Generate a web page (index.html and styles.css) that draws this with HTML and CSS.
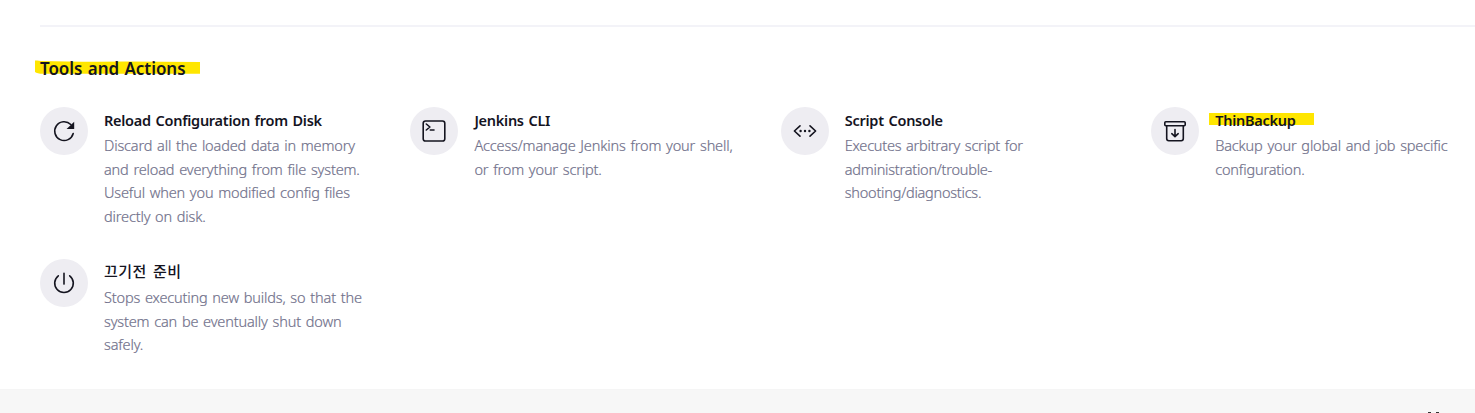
FILE: index.html
```html
<!DOCTYPE html>
<html lang="en">
<head>
<meta charset="utf-8">
<title>Tools and Actions</title>
<link rel="stylesheet" href="styles.css">
</head>
<body>
<main class="panel">
  <section class="section">
    <h2 class="section-title"><svg class="marker marker-heading" viewBox="0 0 165 14" preserveAspectRatio="none"><path d="M0 .6Q3 0 6 1Q40 2 90 1.6L165 2V13.8H8Q2 13.8 0 12Z"/></svg><span class="label">Tools and Actions</span></h2>
    <div class="grid">
      <article class="item">
        <div class="icon"><svg viewBox="0 0 24 24"><path d="M21.2 14.5A9.4 9.4 0 1 1 18.8 5.5"/><path class="solid" d="M22.2 2.8V10H14.6Z"/></svg></div>
        <div class="text"><h3 class="name"><span class="label">Reload Configuration from Disk</span></h3>
          <p class="desc">Discard all the loaded data in memory<br>and reload everything from file system.<br>Useful when you modified config files<br>directly on disk.</p></div>
      </article>
      <article class="item">
        <div class="icon"><svg viewBox="0 0 24 24"><rect x="1.2" y="2" width="21.6" height="20" rx="2.3"/><path d="M4.3 5L7.9 8L4.3 11M8.3 11H12"/></svg></div>
        <div class="text"><h3 class="name"><span class="label">Jenkins CLI</span></h3>
          <p class="desc">Access/manage Jenkins from your shell,<br>or from your script.</p></div>
      </article>
      <article class="item">
        <div class="icon"><svg viewBox="0 0 24 24"><path d="M7 6.8L1.4 12L7 17.2M17 6.8L22.6 12L17 17.2"/><g class="solid"><circle cx="7.6" cy="12" r="1.2"/><circle cx="12" cy="12" r="1.2"/><circle cx="16.4" cy="12" r="1.2"/></g></svg></div>
        <div class="text"><h3 class="name"><span class="label">Script Console</span></h3>
          <p class="desc tight">Executes arbitrary script for<br>administration/trouble-<br>shooting/diagnostics.</p></div>
      </article>
      <article class="item">
        <div class="icon"><svg viewBox="0 0 24 24"><rect x="1.8" y="2.8" width="20.4" height="4" rx="1"/><path d="M3.7 6.8V19.5Q3.7 21.7 5.8 21.7H18.2Q20.3 21.7 20.3 19.5V6.8M12 10.5V17.5M8.8 14.7L12 17.7L15.2 14.7"/></svg></div>
        <div class="text"><h3 class="name"><i class="marker marker-item"></i><span class="label">ThinBackup</span></h3>
          <p class="desc">Backup your global and job specific<br>configuration.</p></div>
      </article>
      <article class="item">
        <div class="icon"><svg viewBox="0 0 24 24"><path d="M6.3 4.8A9.3 9.3 0 1 0 17.7 4.8M12 2.2V13.1"/></svg></div>
        <div class="text"><h3 class="name korean" lang="ko"><span class="label">끄기전 준비</span></h3>
          <p class="desc">Stops executing new builds, so that the<br>system can be eventually shut down<br>safely.</p></div>
      </article>
    </div>
  </section>
</main>
<footer class="footer"><i class="tick"></i><i class="tick"></i></footer>
</body>
</html>
```
FILE: styles.css
```css
* { box-sizing: border-box; }
body {
  margin: 0;
  height: 413px;
  overflow: hidden;
  display: flex;
  flex-direction: column;
  background: #fff;
  color: #14141f;
  font-family: "Noto Sans", "Noto Sans CJK KR", sans-serif;
}
.panel { height: 389px; padding: 25px 0 0 40px; }
.section { border-top: 2px solid #f3f3f8; padding-top: 30px; }
.section-title {
  position: relative;
  margin: 0;
  height: 24px;
  font-size: 17px;
  line-height: 24px;
  font-weight: 600;
  letter-spacing: -0.05px;
  word-spacing: 1px;
  white-space: nowrap;
}
.label { position: relative; }
.marker { position: absolute; }
.marker-heading { left: -5px; top: 3px; width: 165px; height: 14px; fill: #ffe600; }
.marker-item { left: -6px; top: 4px; width: 105px; height: 12px; background: #ffe600; }
.grid {
  display: grid;
  grid-template-columns: repeat(4, 370.4px);
  grid-template-rows: 152px 120px;
  margin-top: 26px;
}
.item { display: flex; gap: 16px; }
.icon {
  flex: none;
  width: 48px;
  height: 48px;
  border-radius: 50%;
  background: #eeedf2;
  display: flex;
  align-items: center;
  justify-content: center;
}
.icon svg {
  width: 24px;
  height: 24px;
  fill: none;
  stroke: #14141f;
  stroke-width: 1.6;
  stroke-linecap: round;
  stroke-linejoin: round;
}
.icon .solid { fill: #14141f; stroke: none; }
.text { padding-top: 2px; white-space: nowrap; }
.name {
  position: relative;
  margin: 0;
  height: 24.8px;
  font-size: 14.5px;
  line-height: 23.7px;
  font-weight: 600;
  letter-spacing: -0.27px;
  word-spacing: 1.2px;
}
.korean {
  font-family: "Noto Sans CJK KR", sans-serif;
  font-weight: 500;
  font-size: 15px;
  line-height: 19px;
  letter-spacing: 0.4px;
  word-spacing: 1.8px;
}
.desc {
  margin: 0;
  font-size: 14.5px;
  line-height: 23.7px;
  color: #71718b;
  font-weight: 300;
  -webkit-text-stroke: 0.2px #71718b;
  letter-spacing: -0.15px;
  word-spacing: 1.2px;
}
.tight { letter-spacing: -0.23px; }
.footer {
  height: 24px;
  background: #f7f7f7;
  border-top: 1px solid #f5f5f5;
  display: flex;
  align-items: flex-end;
  justify-content: flex-end;
  gap: 5px;
  padding-right: 36px;
}
.tick { width: 3px; height: 1px; background: #333; }
```
